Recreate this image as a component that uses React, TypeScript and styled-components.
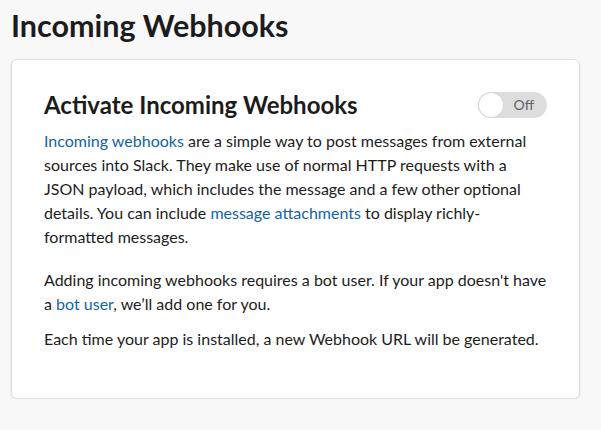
import styled, { createGlobalStyle } from 'styled-components';

const GlobalStyle = createGlobalStyle`
  html, body {
    margin: 0;
    padding: 0;
    background: #f8f8f8;
  }
  body {
    font-family: Lato, "Open Sans", sans-serif;
    color: #1d1c1d;
    -webkit-font-smoothing: antialiased;
  }
`;

const Page = styled.div`
  padding: 5px 21px 0 11px;
`;

const PageTitle = styled.h1`
  margin: 0 0 14px;
  font-size: 30.5px;
  line-height: 40px;
  font-weight: 700;
`;

const Card = styled.section`
  background: #fff;
  border: 1px solid #dddddd;
  border-radius: 6px;
  box-shadow: 0 1px 3px rgba(0, 0, 0, 0.08);
  padding: 29px 32px 47px;
`;

const CardHeader = styled.div`
  display: flex;
  align-items: center;
  justify-content: space-between;
  margin-bottom: 8px;
`;

const CardTitle = styled.h2`
  margin: 0;
  font-size: 24px;
  line-height: 32px;
  font-weight: 700;
`;

const Toggle = styled.button`
  position: relative;
  display: flex;
  align-items: center;
  justify-content: flex-end;
  width: 69px;
  height: 26px;
  padding: 0 13px 0 0;
  border: none;
  border-radius: 13px;
  background: #dddddd;
  color: #616061;
  font-family: Lato, sans-serif;
  font-size: 14px;
  cursor: pointer;
  margin-top: -1px;
`;

const Knob = styled.span`
  position: absolute;
  top: 1px;
  left: 1px;
  width: 24px;
  height: 24px;
  border-radius: 50%;
  background: #fff;
  box-shadow: 0 0 0 1px #d6d6d6;
`;

const Paragraph = styled.p<{ $gap?: number }>`
  margin: 0 0 ${({ $gap }) => $gap ?? 11}px;
  font-size: 16px;
  line-height: 24px;

  &:last-child {
    margin-bottom: 0;
  }
`;

const Link = styled.a`
  color: #1264a3;
  text-decoration: none;
`;

export default function App()
{
  return (
    <>
      <GlobalStyle />
      <Page>
        <PageTitle>Incoming Webhooks</PageTitle>
        <Card>
          <CardHeader>
            <CardTitle>Activate Incoming Webhooks</CardTitle>
            <Toggle aria-pressed={false}>
              <Knob />
              Off
            </Toggle>
          </CardHeader>
          <Paragraph $gap={19}>
            <Link href="#">Incoming webhooks</Link> are a simple way to post messages from external
            sources into Slack. They make use of normal HTTP requests with a JSON payload, which
            includes the message and a few other optional details. You can include{' '}
            <Link href="#">message attachments</Link> to display richly-formatted messages.
          </Paragraph>
          <Paragraph>
            Adding incoming webhooks requires a bot user. If your app doesn't have a{' '}
            <Link href="#">bot user</Link>, we’ll add one for you.
          </Paragraph>
          <Paragraph>Each time your app is installed, a new Webhook URL will be generated.</Paragraph>
        </Card>
      </Page>
    </>
  );
}
